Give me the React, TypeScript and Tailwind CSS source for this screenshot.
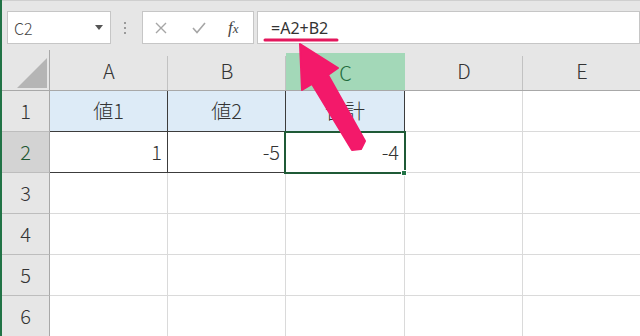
import React from "react";

const FONT = { fontFamily: '"Noto Sans CJK JP", "Noto Sans", sans-serif' };

function HeaderCell({ label, w, selected }: { label: string; w: string; selected?: boolean }) {
  return (
    <div className={`relative h-full shrink-0 ${w} ${selected ? "pt-[3px]" : ""}`}>
      <div
        className={`flex h-full items-center justify-center pt-[2px] text-[20px] font-light ${
          selected ? "bg-[#a3d8b8] text-[#1d6b3c]" : "text-[#333]"
        }`}
      >
        {label}
      </div>
      {!selected && <span className="absolute right-0 top-[6px] bottom-0 w-px bg-[#c2c2c2]" />}
    </div>
  );
}

type CellProps = {
  w: string;
  text?: string;
  align?: "center" | "right";
  bg?: string;
  border?: string;
};

function Cell({ w, text, align, bg, border }: CellProps) {
  return (
    <div
      className={`flex h-full shrink-0 items-center border-r border-b text-[20px] font-light text-[#333] ${w} ${
        bg ?? "bg-white"
      } ${border ?? "border-[#dadada]"} ${
        align === "right" ? "justify-end pr-[5px]" : "justify-center"
      }`}
    >
      {text}
    </div>
  );
}

function RowHead({ n, selected }: { n: number; selected?: boolean }) {
  return (
    <div
      className={`flex h-full w-[48px] shrink-0 items-center justify-center border-r border-b border-r-[#a8a8a8] border-b-[#bdbdbd] text-[20px] font-light ${
        selected ? "bg-[#d3d3d3] text-[#1e5631]" : "bg-[#e6e6e6] text-[#333]"
      }`}
    >
      {n}
    </div>
  );
}

export default function App() {
  const widths = ["w-[118px]", "w-[118px]", "w-[119px]", "w-[118px]", "w-[118px]"];
  const tb = "border-[#3c3c3c]";
  return (
    <div
      className="relative h-[336px] w-[640px] overflow-hidden border-l-2 border-[#217346] bg-white"
      style={FONT}
    >
      {/* Top bar */}
      <div className="flex h-[50px] items-start border-t border-[#cfcfcf] bg-[#e6e6e6] pt-[10px]">
        <div className="ml-[5px] flex h-[33px] w-[104px] items-center justify-between border border-[#c6c6c6] bg-white pl-[6px] pr-[7px]">
          <span className="text-[16px] font-light text-[#444]">C2</span>
          <svg width="8" height="5" viewBox="0 0 8 5">
            <polygon points="0,0 8,0 4,5" fill="#555" />
          </svg>
        </div>
        <div className="ml-[13px] flex h-[33px] flex-col items-center justify-center gap-[3px]">
          <span className="h-[2px] w-[2px] bg-[#9a9a9a]" />
          <span className="h-[2px] w-[2px] bg-[#9a9a9a]" />
          <span className="h-[2px] w-[2px] bg-[#9a9a9a]" />
        </div>
        <div className="ml-[16px] flex h-[33px] w-[112px] items-center border border-[#c6c6c6] bg-white">
          <svg className="ml-[12px]" width="12" height="12" viewBox="0 0 12 12">
            <path d="M1 1 L11 11 M11 1 L1 11" stroke="#a6a6a6" strokeWidth="1.4" />
          </svg>
          <svg className="ml-[25px]" width="14" height="12" viewBox="0 0 14 12">
            <path d="M1 6 L5 10.5 L13 1" stroke="#a6a6a6" strokeWidth="1.6" fill="none" />
          </svg>
          <span
            className="ml-[22px] text-[17px] italic text-[#444]"
            style={{ fontFamily: '"Liberation Serif", "DejaVu Serif", serif' }}
          >
            f<span className="text-[13px]">x</span>
          </span>
        </div>
        <div className="ml-[3px] flex h-[33px] flex-1 items-center border border-[#c6c6c6] bg-white pl-[13px]">
          <span className="text-[16px] text-[#333]" style={{ fontFamily: '"Noto Sans", sans-serif' }}>
            =A2+B2
          </span>
        </div>
      </div>

      {/* Column headers */}
      <div className="flex h-[41px] border-b border-[#a8a8a8] bg-[#e6e6e6]">
        <div className="relative flex h-full w-[48px] shrink-0 items-end border-r border-[#a8a8a8] pb-[2px] pl-[15px]">
          <svg width="30" height="30" viewBox="0 0 30 30">
            <polygon points="0,30 30,30 30,0" fill="#b5b5b5" />
          </svg>
        </div>
        {["A", "B", "C", "D", "E"].map((c, i) => (
          <HeaderCell key={c} label={c} w={widths[i]} selected={c === "C"} />
        ))}
      </div>

      {/* Row 1 */}
      <div className="flex h-[41px]">
        <RowHead n={1} />
        <Cell w={widths[0]} text="値1" bg="bg-[#ddebf7]" border={tb} />
        <Cell w={widths[1]} text="値2" bg="bg-[#ddebf7]" border={tb} />
        <Cell w={widths[2]} text="合計" bg="bg-[#ddebf7]" border={tb} />
        <Cell w={widths[3]} />
        <Cell w={widths[4]} />
      </div>

      {/* Row 2 */}
      <div className="flex h-[41px]">
        <RowHead n={2} selected />
        <Cell w={widths[0]} text="1" align="right" border={tb} />
        <Cell w={widths[1]} text="-5" align="right" border={tb} />
        <Cell w={widths[2]} text="-4" align="right" border={tb} />
        <Cell w={widths[3]} />
        <Cell w={widths[4]} />
      </div>

      {[3, 4, 5, 6].map((n) => (
        <div key={n} className="flex h-[41px]">
          <RowHead n={n} />
          {widths.map((w, i) => (
            <Cell key={i} w={w} />
          ))}
        </div>
      ))}

      {/* Selection box for C2 */}
      <div className="pointer-events-none absolute left-[282px] top-[131px] h-[43px] w-[122px] border-2 border-[#1f5a36]" />
      <div className="absolute left-[399px] top-[170px] h-[6px] w-[6px] border border-white bg-[#217346]" />

      {/* Annotation: underline + arrow */}
      <svg className="pointer-events-none absolute left-[-2px] top-0" width="640" height="336" viewBox="0 0 640 336">
        <line x1="265" y1="40" x2="337" y2="40" stroke="#e3175c" strokeWidth="3" strokeLinecap="round" />
        <polygon
          points="300,44 338,68 328,75 365,141 361,149 352,150 312,84 302,90"
          fill="#f3196a"
          strokeLinejoin="round"
          stroke="#f3196a"
          strokeWidth="2"
        />
      </svg>
    </div>
  );
}
